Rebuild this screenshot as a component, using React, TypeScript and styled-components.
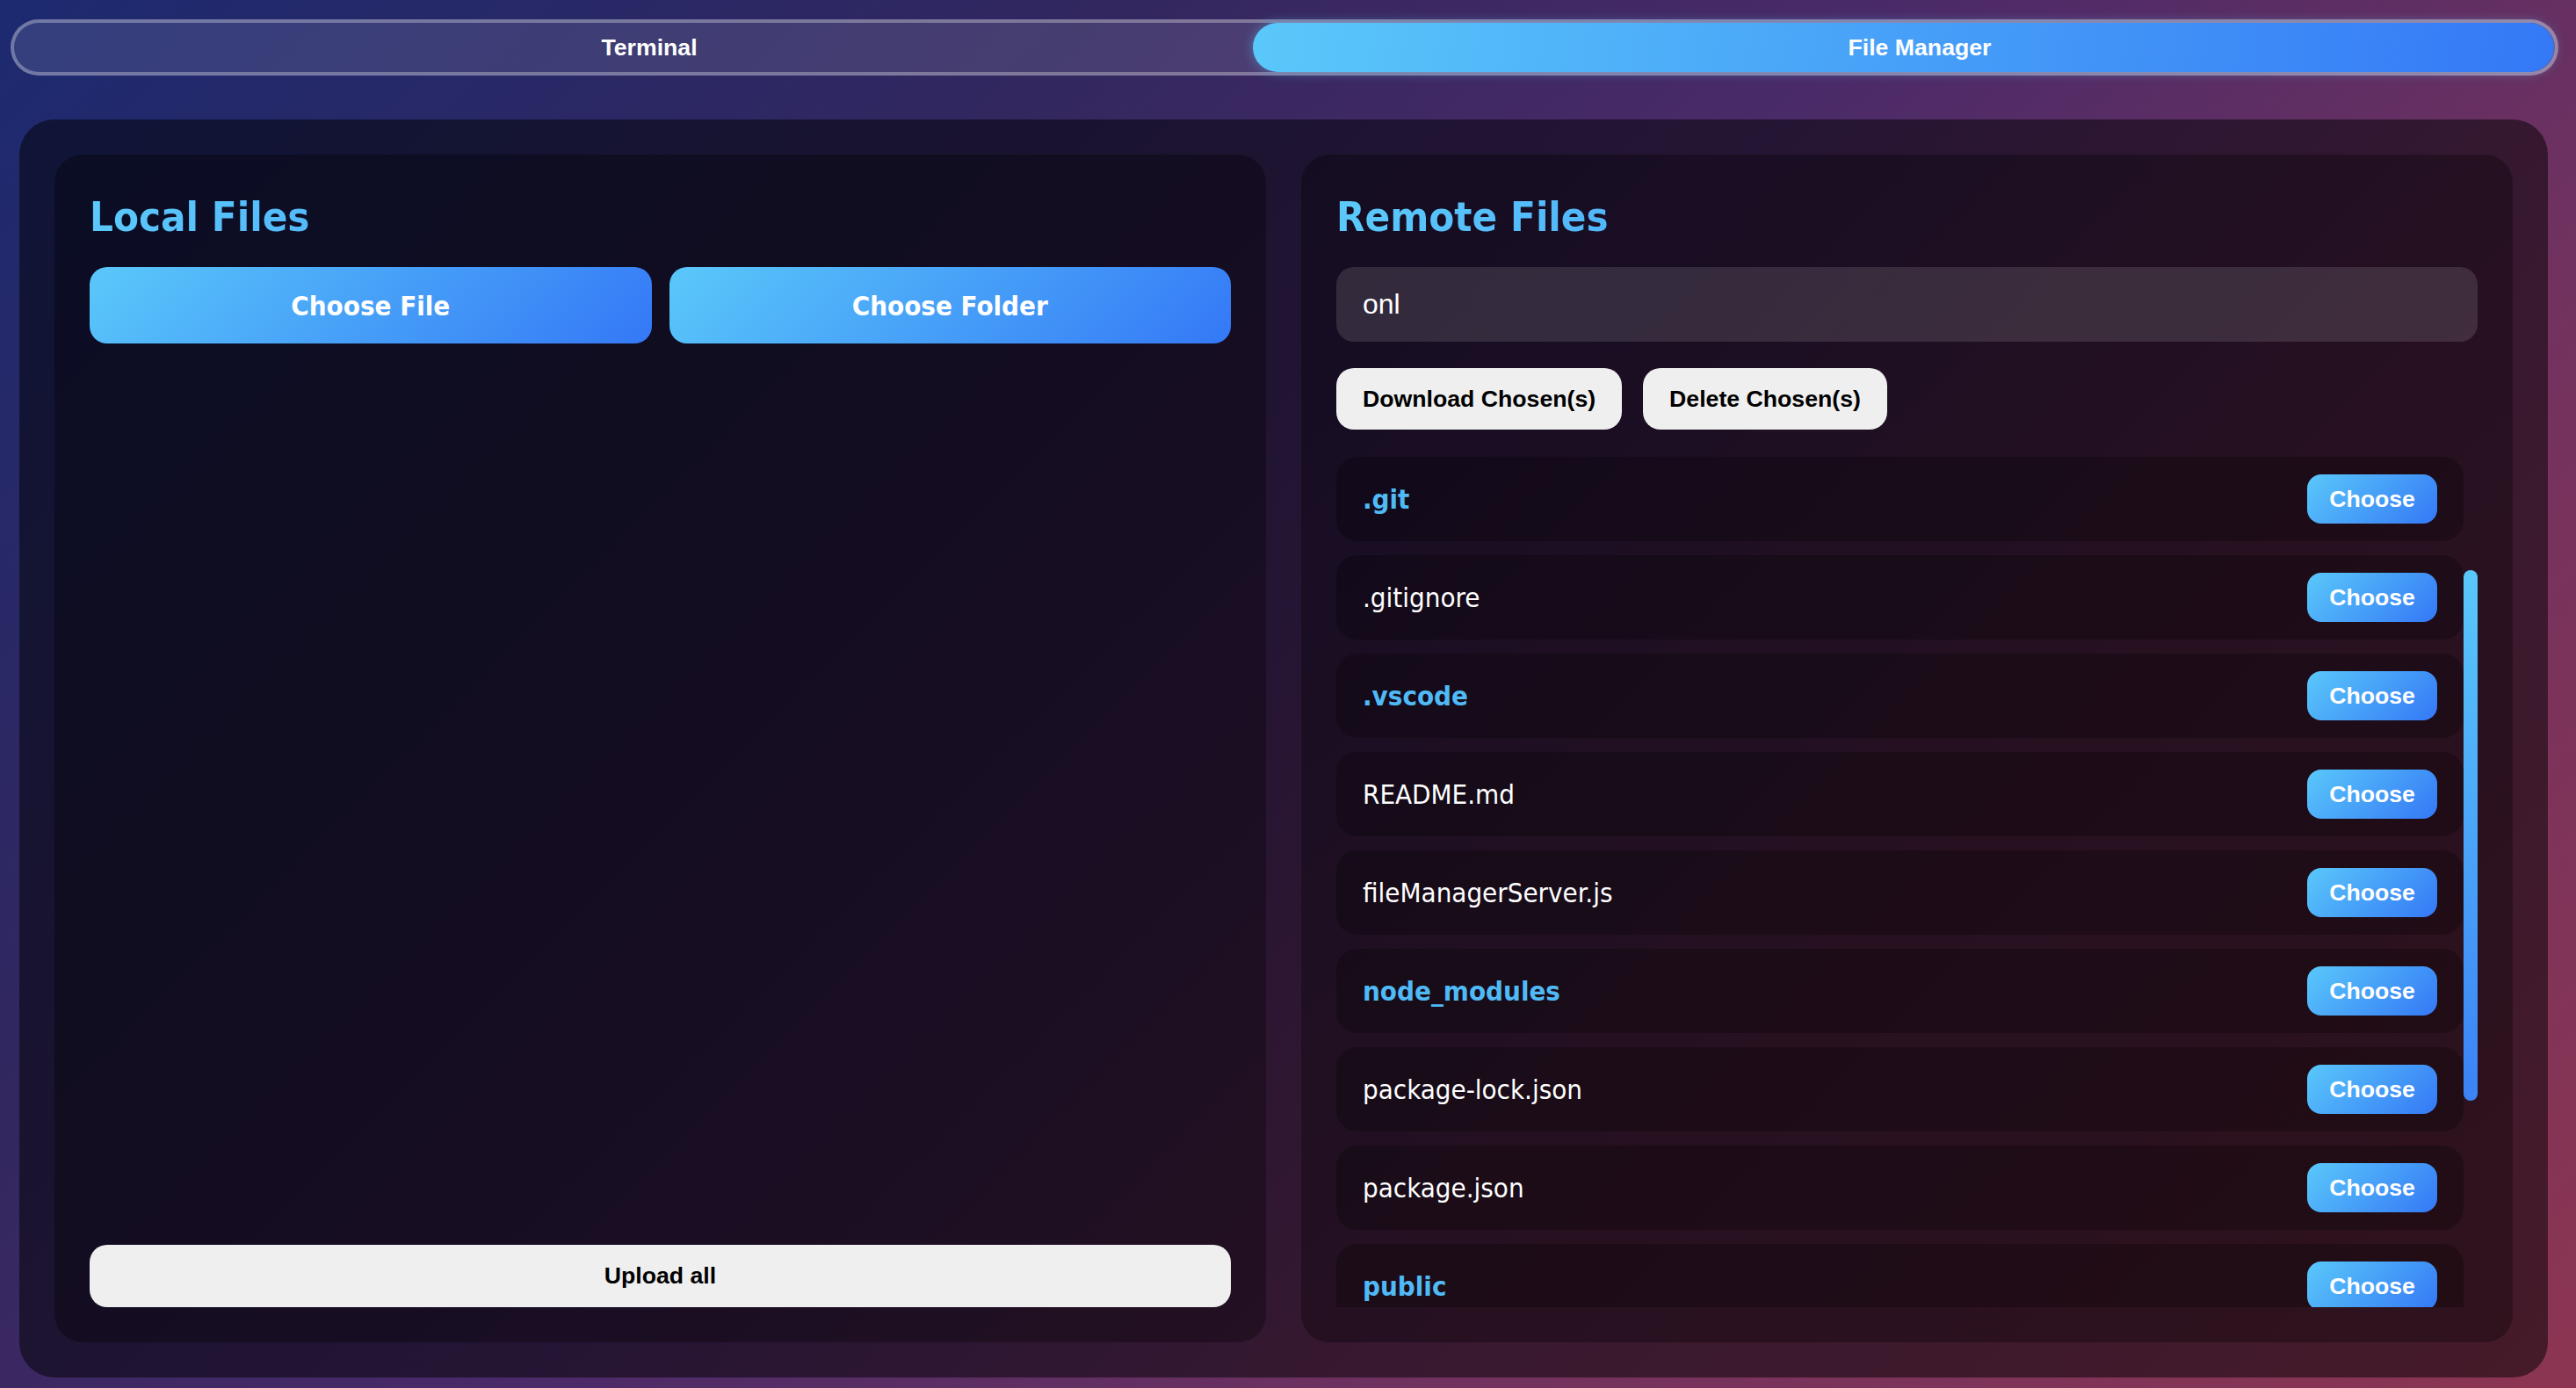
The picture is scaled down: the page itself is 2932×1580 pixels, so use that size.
import React from "react";
import styled, { createGlobalStyle } from "styled-components";

const GlobalStyle = createGlobalStyle`
  html, body {
    margin: 0;
    padding: 0;
    height: 100%;
  }
  body {
    background: linear-gradient(135deg, #1d2a70 0%, #32275f 28%, #4a2a68 48%, #72325f 72%, #8c3552 100%);
    font-family: "DejaVu Sans Condensed", "DejaVu Sans", sans-serif;
    color: #fff;
  }
  #root { height: 100%; }
  * { box-sizing: border-box; }
`;

const Page = styled.div`
  height: 100vh;
  display: flex;
  flex-direction: column;
  padding: 22px 20px 12px 12px;
`;

const TabBar = styled.nav`
  position: relative;
  display: flex;
  height: 64px;
  flex-shrink: 0;
  border: 4px solid rgba(255, 255, 255, 0.3);
  border-radius: 32px;
  background: rgba(255, 255, 255, 0.1);
`;

const TabIndicator = styled.div`
  position: absolute;
  top: 0;
  bottom: 0;
  left: calc(50% - 36px);
  right: 1px;
  border-radius: 28px;
  background: linear-gradient(100deg, #5ac8fa 0%, #3478f6 100%);
  box-shadow: 0 0 14px rgba(90, 200, 250, 0.45);
`;

const TabButton = styled.button<{ $active?: boolean }>`
  position: relative;
  flex: 1;
  border: none;
  background: transparent;
  color: #fff;
  font-family: "Liberation Sans", Arial, sans-serif;
  font-weight: 700;
  font-size: 26.67px;
  cursor: pointer;
`;

const Container = styled.main`
  flex: 1;
  min-height: 0;
  margin: 50px 12px 0 10px;
  padding: 40px;
  border-radius: 40px;
  background: rgba(0, 0, 0, 0.5);
  display: grid;
  grid-template-columns: 1fr 1fr;
  gap: 40px;
`;

const Panel = styled.section`
  min-height: 0;
  display: flex;
  flex-direction: column;
  padding: 40px;
  border-radius: 32px;
  background: rgba(0, 0, 0, 0.3);
`;

const Heading = styled.h2`
  margin: 0 0 28px;
  padding-top: 2px;
  font-size: 47px;
  line-height: 58px;
  font-weight: 700;
  background: linear-gradient(135deg, #5ccbfb 0%, #3478f6 100%);
  -webkit-background-clip: text;
  background-clip: text;
  color: transparent;
`;

const PickRow = styled.div`
  display: grid;
  grid-template-columns: 1fr 1fr;
  gap: 20px;
`;

const PickButton = styled.button`
  height: 87px;
  border: none;
  border-radius: 20px;
  background: linear-gradient(135deg, #5ac8fa 0%, #3478f6 100%);
  color: #fff;
  font-family: "DejaVu Sans Condensed", "DejaVu Sans", sans-serif;
  font-weight: 700;
  font-size: 31px;
  cursor: pointer;
`;

const Spacer = styled.div`
  flex: 1;
`;

const LightButton = styled.button<{ $wide?: boolean }>`
  height: ${(p) => (p.$wide ? "71px" : "70px")};
  width: ${(p) => (p.$wide ? "100%" : "auto")};
  padding: 0 30px;
  border: none;
  border-radius: 20px;
  background: #efefef;
  color: #000;
  font-family: "Liberation Sans", Arial, sans-serif;
  font-weight: 700;
  font-size: 26.67px;
  cursor: pointer;
`;

const SearchInput = styled.input`
  height: 85px;
  width: 100%;
  padding: 0 30px;
  border: none;
  outline: none;
  border-radius: 20px;
  background: rgba(255, 255, 255, 0.12);
  color: #fff;
  font-family: "Liberation Sans", Arial, sans-serif;
  font-size: 32px;
`;

const ActionRow = styled.div`
  display: flex;
  gap: 24px;
  margin: 30px 0 31px;
`;

const ListArea = styled.div`
  flex: 1;
  min-height: 0;
  display: flex;
`;

const RowList = styled.ul`
  flex: 1;
  min-width: 0;
  margin: 0;
  padding: 0;
  list-style: none;
  display: flex;
  flex-direction: column;
  gap: 16px;
  overflow: hidden;
`;

const FileRow = styled.li`
  flex-shrink: 0;
  height: 96px;
  display: flex;
  align-items: center;
  justify-content: space-between;
  padding: 0 30px;
  border-radius: 24px;
  background: rgba(0, 0, 0, 0.25);
`;

const FileName = styled.span<{ $dir?: boolean }>`
  font-size: 31px;
  font-weight: ${(p) => (p.$dir ? 700 : 400)};
  color: ${(p) => (p.$dir ? "#4fbaf6" : "#fff")};
`;

const ChooseButton = styled.button`
  width: 148px;
  height: 56px;
  border: none;
  border-radius: 16px;
  background: linear-gradient(135deg, #5ac8fa 0%, #3478f6 100%);
  color: #fff;
  font-family: "Liberation Sans", Arial, sans-serif;
  font-weight: 700;
  font-size: 26.67px;
  cursor: pointer;
`;

const ScrollTrack = styled.div`
  width: 16px;
  flex-shrink: 0;
  padding-top: 129px;
`;

const ScrollThumb = styled.div`
  height: 604px;
  border-radius: 8px;
  background: linear-gradient(180deg, #5ac8fa 0%, #3b82f6 100%);
`;

const files: { name: string; dir?: boolean }[] = [
  { name: ".git", dir: true },
  { name: ".gitignore" },
  { name: ".vscode", dir: true },
  { name: "README.md" },
  { name: "fileManagerServer.js" },
  { name: "node_modules", dir: true },
  { name: "package-lock.json" },
  { name: "package.json" },
  { name: "public", dir: true },
];

export default function App() {
  return (
    <>
      <GlobalStyle />
      <Page>
        <TabBar>
          <TabIndicator />
          <TabButton>Terminal</TabButton>
          <TabButton $active>File Manager</TabButton>
        </TabBar>
        <Container>
          <Panel>
            <Heading>Local Files</Heading>
            <PickRow>
              <PickButton>Choose File</PickButton>
              <PickButton>Choose Folder</PickButton>
            </PickRow>
            <Spacer />
            <LightButton $wide>Upload all</LightButton>
          </Panel>
          <Panel>
            <Heading>Remote Files</Heading>
            <SearchInput defaultValue="onl" />
            <ActionRow>
              <LightButton>Download Chosen(s)</LightButton>
              <LightButton>Delete Chosen(s)</LightButton>
            </ActionRow>
            <ListArea>
              <RowList>
                {files.map((f) => (
                  <FileRow key={f.name}>
                    <FileName $dir={f.dir}>{f.name}</FileName>
                    <ChooseButton>Choose</ChooseButton>
                  </FileRow>
                ))}
              </RowList>
              <ScrollTrack>
                <ScrollThumb />
              </ScrollTrack>
            </ListArea>
          </Panel>
        </Container>
      </Page>
    </>
  );
}
